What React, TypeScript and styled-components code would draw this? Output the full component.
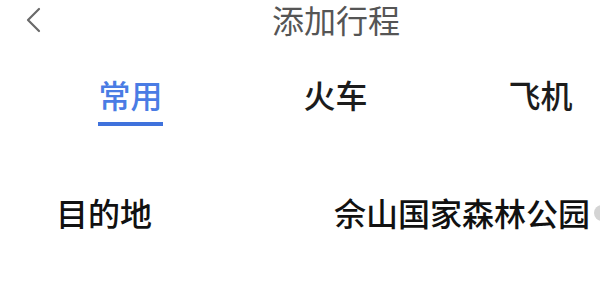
import React, { useState } from 'react'
import styled, { createGlobalStyle } from 'styled-components'

const GlobalStyle = createGlobalStyle`
  html, body {
    margin: 0;
    padding: 0;
    background: #fff;
  }
  body {
    width: 600px;
    height: 295px;
    overflow: hidden;
    font-family: "Noto Sans CJK SC", "Noto Sans", sans-serif;
  }
`;

const tabs = ['常用', '火车', '飞机'];

export default function App() {
  const [active, setActive] = useState(0);

  return (
    <Page>
      <GlobalStyle />
      <Header>
        <BackButton type="button" aria-label="返回">
          <svg width="16" height="26" viewBox="0 0 16 26" fill="none">
            <path d="M14 2 L3 13 L14 24" stroke="#6a6a6a" strokeWidth="2.2" strokeLinecap="round" strokeLinejoin="round" />
          </svg>
        </BackButton>
        <Title>添加行程</Title>
      </Header>

      <TabBar>
        {tabs.map((t, i) => (
          <Tab key={t} onClick={() => setActive(i)}>
            <TabLabel active={i === active}>{t}</TabLabel>
          </Tab>
        ))}
      </TabBar>

      <Row>
        <RowLabel>目的地</RowLabel>
        <RowValue>
          佘山国家森林公园
          <ClearDot />
        </RowValue>
      </Row>
    </Page>
  )
}

const Page = styled.div`
  width: 600px;
  height: 295px;
  overflow: hidden;
  display: flex;
  flex-direction: column;
`;

const Header = styled.div`
  display: flex;
  align-items: flex-start;
  height: 40px;
  padding-left: 25px;
`;

const BackButton = styled.button`
  display: flex;
  align-items: center;
  width: 18px;
  height: 30px;
  padding: 0;
  border: none;
  background: none;
  margin-top: 5px;
`;

const Title = styled.div`
  margin-left: 229px;
  font-size: 32px;
  line-height: 1.2;
  color: #555;
`;

const TabBar = styled.div`
  display: grid;
  grid-template-columns: repeat(3, 205px);
  padding-left: 28px;
  margin-top: 35px;
`;

const Tab = styled.div`
  display: flex;
  justify-content: center;
  cursor: pointer;
`;

interface TabLabelProps {
  active: boolean;
}

const TabLabel = styled.span<TabLabelProps>`
  font-size: 32px;
  line-height: 1.2;
  font-weight: 500;
  padding-bottom: 9px;
  color: ${({ active }) => (active ? '#4a7ce4' : '#1c1c1c')};
  border-bottom: 4px solid ${({ active }) => (active ? '#3f72dc' : 'transparent')};
`;

const Row = styled.div`
  display: flex;
  align-items: center;
  justify-content: space-between;
  padding-left: 56px;
  margin-top: 67px;
  width: 600px;
  box-sizing: border-box;
`;

const RowLabel = styled.span`
  font-size: 32px;
  line-height: 1.2;
  font-weight: 500;
  color: #111;
`;

const RowValue = styled.span`
  display: flex;
  align-items: center;
  gap: 4px;
  font-size: 32px;
  line-height: 1.2;
  font-weight: 500;
  color: #111;
  margin-right: -10px;
`;

const ClearDot = styled.span`
  width: 16px;
  height: 16px;
  border-radius: 50%;
  background: #d4d4d4;
  flex-shrink: 0;
`;
